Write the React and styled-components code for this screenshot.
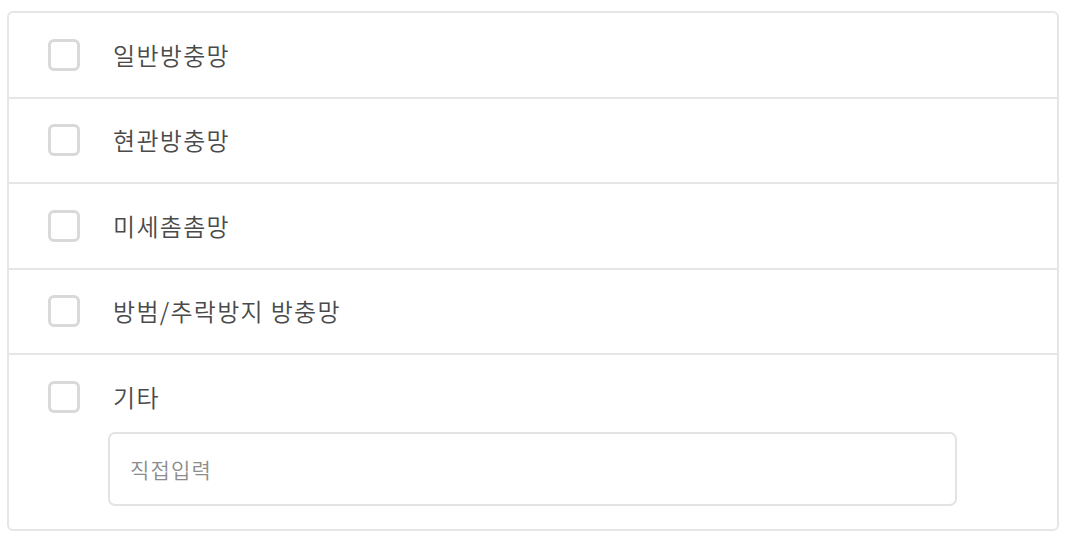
import React from "react";
import styled, { createGlobalStyle } from "styled-components";

const Global = createGlobalStyle`
  html, body { margin: 0; padding: 0; background: #fff; }
  body { font-family: "Noto Sans CJK KR", "Noto Sans", sans-serif; }
  * { box-sizing: border-box; }
`;

const Page = styled.div`
  padding: 11px 9px 12px 7px;
`;

const Card = styled.div`
  border: 2px solid #e6e6e6;
  border-radius: 6px;
  background: #fff;
  overflow: hidden;
`;

const Row = styled.div`
  display: flex;
  flex-direction: column;
  padding: 25.5px 39px ${(p) => (p.$last ? "23px" : "26px")};
  border-bottom: ${(p) => (p.$last ? "none" : "2px solid #e6e6e6")};
`;

const Line = styled.label`
  display: flex;
  align-items: center;
  gap: 33px;
  height: 32px;
  cursor: pointer;
`;

const Box = styled.span`
  width: 32px;
  height: 32px;
  flex: none;
  border: 3px solid #d9d9d9;
  border-radius: 6px;
  background: #fff;
`;

const Label = styled.span`
  font-size: 24px;
  font-weight: 350;
  color: #4a4a4a;
  line-height: 32px;
  letter-spacing: 1.3px;
`;

const Input = styled.input`
  margin: 19px 61px 0 60px;
  height: 74px;
  border: 2px solid #e3e3e3;
  border-radius: 7px;
  padding: 0 20px;
  font-family: "Noto Sans CJK KR", "Noto Sans", sans-serif;
  font-size: 21px;
  font-weight: 350;
  letter-spacing: 1.2px;
  color: #333;
  outline: none;
  &::placeholder { color: #8c8c8c; }
`;

const items = ["일반방충망", "현관방충망", "미세촘촘망", "방범/추락방지 방충망", "기타"];

export default function App() {
  return (
    <>
      <Global />
      <Page>
        <Card>
          {items.map((t, i) => {
            const last = i === items.length - 1;
            return (
              <Row key={t} $last={last}>
                <Line>
                  <Box />
                  <Label>{t}</Label>
                </Line>
                {last && <Input placeholder="직접입력" />}
              </Row>
            );
          })}
        </Card>
      </Page>
    </>
  );
}
